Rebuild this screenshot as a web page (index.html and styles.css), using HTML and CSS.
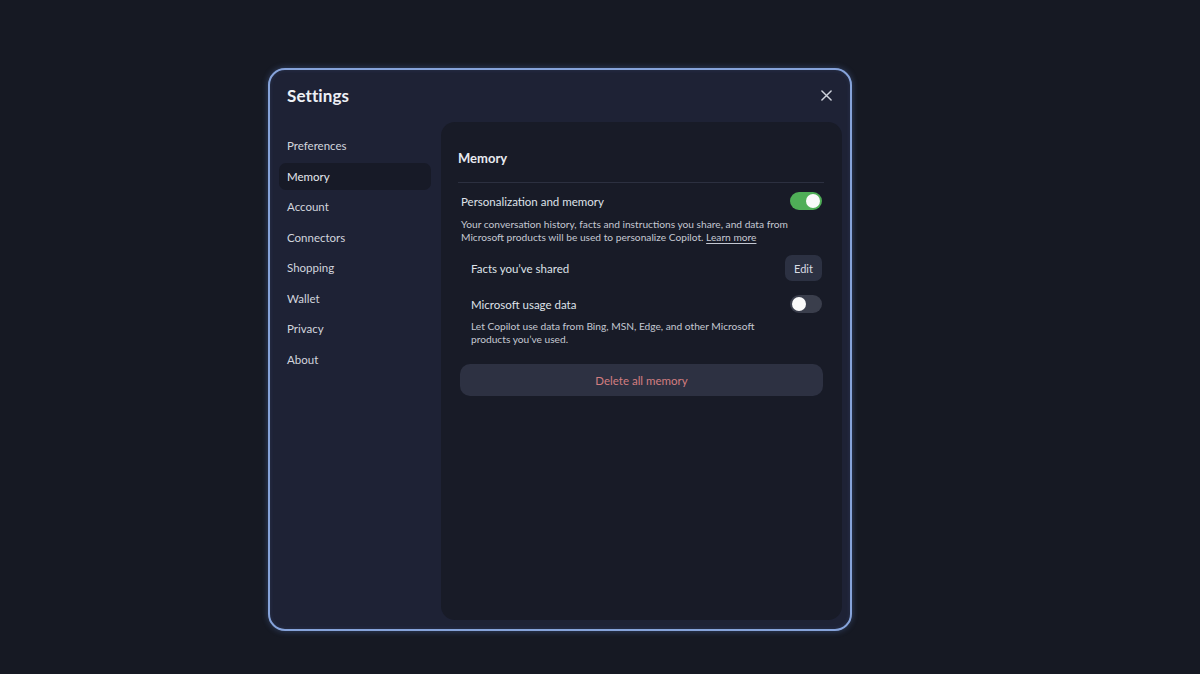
FILE: index.html
```html
<!DOCTYPE html>
<html lang="en">
<head>
<meta charset="utf-8">
<title>Settings</title>
<link rel="stylesheet" href="styles.css">
</head>
<body>
<div class="modal">
  <header class="modal-header">
    <h1 class="modal-title">Settings</h1>
    <button class="close-btn" aria-label="Close">
      <svg width="11" height="11" viewBox="0 0 12 12"><path d="M1 1L11 11M11 1L1 11" stroke="#cfd3dc" stroke-width="1.6" stroke-linecap="round"/></svg>
    </button>
  </header>
  <div class="modal-body">
    <nav class="sidebar">
      <div class="nav-item">Preferences</div>
      <div class="nav-item active">Memory</div>
      <div class="nav-item">Account</div>
      <div class="nav-item">Connectors</div>
      <div class="nav-item">Shopping</div>
      <div class="nav-item">Wallet</div>
      <div class="nav-item">Privacy</div>
      <div class="nav-item">About</div>
    </nav>
    <section class="panel">
      <h2 class="panel-title">Memory</h2>
      <div class="row row-main">
        <span class="label">Personalization and memory</span>
        <span class="toggle on"><span class="knob"></span></span>
      </div>
      <p class="desc desc-main"><span class="line">Your conversation history, facts and instructions you share, and data from</span> <span class="line">Microsoft products will be used to personalize Copilot. <a class="link" href="#">Learn more</a></span></p>
      <div class="row row-sub row-facts">
        <span class="label">Facts you’ve shared</span>
        <button class="edit-btn">Edit</button>
      </div>
      <div class="row row-sub row-usage">
        <span class="label">Microsoft usage data</span>
        <span class="toggle off"><span class="knob"></span></span>
      </div>
      <p class="desc desc-sub">Let Copilot use data from Bing, MSN, Edge, and other Microsoft products you’ve used.</p>
      <button class="delete-btn">Delete all memory</button>
    </section>
  </div>
</div>
</body>
</html>
```

FILE: styles.css
```css
* { box-sizing: border-box; }

html, body {
  margin: 0;
  padding: 0;
  height: 100%;
}

body {
  background: #161923;
  font-family: "Lato", "Noto Sans", sans-serif;
  color: #e4e6ec;
  padding: 68px 0 0 268px;
}

.modal {
  width: 584px;
  height: 563px;
  background: #1e2235;
  border: 2px solid #86a3da;
  border-radius: 17px;
  box-shadow: 0 0 6px rgba(110, 150, 230, 0.35), inset 0 0 4px rgba(110, 150, 230, 0.15);
  display: flex;
  flex-direction: column;
}

.modal-header {
  height: 52px;
  display: flex;
  align-items: center;
  justify-content: space-between;
  padding: 0 18px 2px 17px;
}

.modal-title {
  margin: 0;
  font-size: 17px;
  font-weight: 700;
  color: #eef0f5;
  letter-spacing: 0.1px;
}

.close-btn {
  background: none;
  border: 0;
  padding: 0;
  width: 11px;
  height: 11px;
  display: flex;
  cursor: pointer;
}

.modal-body {
  flex: 1;
  display: flex;
  padding: 0 8px 9px 0;
}

.sidebar {
  width: 171px;
  padding: 10px 10px 0 9px;
  display: flex;
  flex-direction: column;
  gap: 3.5px;
}

.nav-item {
  height: 27px;
  display: flex;
  align-items: center;
  padding-left: 8px;
  font-size: 11.5px;
  color: #d2d5de;
  border-radius: 7px;
}

.nav-item.active {
  background: #171a27;
  color: #e6e8ee;
}

.panel {
  flex: 1;
  background: #181b27;
  border-radius: 14px;
  padding: 28px 18px 0 17px;
  display: flex;
  flex-direction: column;
}

.panel-title {
  margin: 0;
  font-size: 13px;
  font-weight: 700;
  line-height: 16px;
  color: #e8eaf0;
  padding-bottom: 16px;
  border-bottom: 1px solid #2c3040;
}

.row {
  display: flex;
  align-items: center;
  justify-content: space-between;
}

.label {
  font-size: 11.5px;
  color: #dfe2e9;
}

.row-main {
  margin-top: 9px;
  height: 18px;
  padding: 0 2px 0 3px;
}

.row-sub {
  padding: 0 2px 0 13px;
}

.row-facts {
  margin-top: 11.5px;
  height: 26px;
}

.row-usage {
  margin-top: 14px;
  height: 18px;
}

.desc {
  margin: 0;
  font-size: 10.2px;
  line-height: 13px;
  color: #c4c8d2;
}

.desc-main {
  margin-top: 7.5px;
  padding-left: 3px;
  padding-right: 20px;
}

.desc-main .line {
  display: block;
}

.desc-sub {
  margin-top: 6.5px;
  padding-left: 13px;
  padding-right: 50px;
}

.link {
  color: inherit;
  text-decoration: underline;
  text-underline-offset: 1.5px;
}

.toggle {
  width: 32px;
  height: 18px;
  border-radius: 9px;
  display: flex;
  align-items: center;
  padding: 0 2px;
}

.toggle.on {
  background: #4fae57;
  justify-content: flex-end;
}

.toggle.off {
  background: #3a3e4c;
  justify-content: flex-start;
}

.knob {
  width: 14px;
  height: 14px;
  border-radius: 50%;
  background: #fafafa;
}

.edit-btn {
  width: 37px;
  height: 26px;
  border: 0;
  border-radius: 7px;
  background: #2c3142;
  color: #d9dce4;
  font-family: inherit;
  font-size: 11px;
  padding: 0;
}

.delete-btn {
  margin-top: 18.5px;
  margin-left: 2px;
  width: 363px;
  height: 32px;
  border: 0;
  border-radius: 10px;
  background: #2d3142;
  color: #d27d80;
  font-family: inherit;
  font-size: 11.5px;
  padding: 0;
}
```
